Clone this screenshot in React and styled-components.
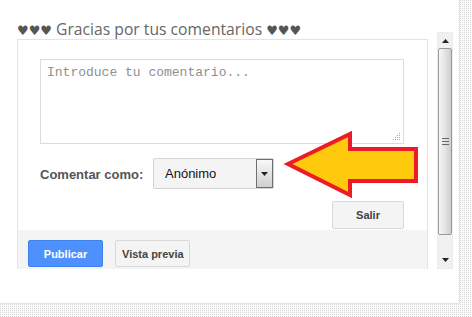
import React from "react";
import styled, { createGlobalStyle } from "styled-components";

const Global = createGlobalStyle`
  html, body { margin: 0; padding: 0; background: #fff; }
  body { font-family: "Liberation Sans", Arial, sans-serif; }
  * { box-sizing: border-box; }
`;

const Page = styled.div`
  position: relative;
  width: 472px;
  height: 317px;
  overflow: hidden;
  background-color: #d6d6d6;
  background-image:
    linear-gradient(90deg, transparent 1px, #fbfbfb 1px),
    linear-gradient(transparent 1px, #fbfbfb 1px);
  background-size: 2px 2px;
`;

const Card = styled.div`
  width: 460px;
  height: 304px;
  background: #fff;
  border-right: 1px solid #e2e2e2;
  border-bottom: 1px solid #e2e2e2;
  padding: 19px 0 0 17px;
`;

const Row = styled.div`
  display: flex;
  align-items: flex-end;
  gap: 9px;
`;

const Column = styled.div`
  width: 411px;
  display: flex;
  flex-direction: column;
`;

const Title = styled.h2`
  margin: 0;
  height: 20px;
  font-family: "Open Sans", "DejaVu Sans", sans-serif;
  font-weight: 400;
  font-size: 15.7px;
  line-height: 20px;
  color: #666;
  white-space: nowrap;
`;

const Hearts = styled.span`
  font-family: "DejaVu Sans", sans-serif;
  font-size: 13px;
  line-height: 1;
  color: #555;
`;

const Frame = styled.div`
  height: 230px;
  border: 1px solid #e4e4e4;
  border-bottom: none;
  display: flex;
  flex-direction: column;
  overflow: hidden;
`;

const Body = styled.div`
  padding: 19px 23px 0 22px;
`;

const AreaWrap = styled.div`
  position: relative;
  width: 100%;
  height: 85px;
`;

const TextArea = styled.textarea`
  display: block;
  width: 100%;
  height: 100%;
  resize: none;
  border: 1px solid #dcdcdc;
  padding: 5px 6px;
  font-family: "Liberation Mono", "Courier New", monospace;
  font-size: 13px;
  line-height: 16px;
  color: #333;
  outline: none;
  &::placeholder { color: #8f8f8f; }
`;

const Grip = styled.svg`
  position: absolute;
  right: 3px;
  bottom: 3px;
`;

const FormRow = styled.div`
  display: flex;
  align-items: center;
  margin-top: 14px;
`;

const Label = styled.label`
  flex: none;
  width: 113px;
  font-weight: 700;
  font-size: 13px;
  color: #555;
  padding-top: 1px;
`;

const Select = styled.div`
  position: relative;
  width: 121px;
  height: 31px;
  border: 1px solid #d4d4d4;
  border-radius: 2px;
  background: #f4f4f4;
  display: flex;
  align-items: center;
  padding-left: 11px;
  font-size: 13px;
  color: #111;
`;

const SelectButton = styled.span`
  position: absolute;
  right: 0;
  top: 0;
  bottom: 0;
  width: 17px;
  border: 1px solid #6f6f6f;
  background: linear-gradient(#f8f8f8, #cfcfcf);
  display: flex;
  align-items: center;
  justify-content: center;
`;

const Actions = styled.div`
  display: flex;
  justify-content: flex-end;
  margin-top: 12px;
  margin-bottom: 1px;
`;

const Button = styled.button`
  height: ${(p) => p.$h || 27}px;
  width: ${(p) => p.$w}px;
  padding: 0 6px;
  border-radius: 2px;
  font-family: "Liberation Sans", Arial, sans-serif;
  font-weight: 700;
  font-size: 11px;
  white-space: nowrap;
  overflow: hidden;
  border: 1px solid ${(p) => (p.$primary ? "#3b82ee" : "#d8d8d8")};
  background: ${(p) => (p.$primary ? "#4d90fe" : "#f4f4f4")};
  color: ${(p) => (p.$primary ? "#fff" : "#444")};
`;

const Footer = styled.div`
  flex: 1;
  background: #f4f4f4;
  display: flex;
  align-items: flex-start;
  gap: 12px;
  padding: 10px 0 0 10px;
`;

const Scrollbar = styled.div`
  width: 16px;
  height: 237px;
  background: #f0f0f0;
  border: 1px solid #ececec;
  display: flex;
  flex-direction: column;
`;

const ScrollBtn = styled.div`
  height: ${(p) => p.$h}px;
  flex: ${(p) => (p.$grow ? 1 : "none")};
  display: flex;
  align-items: ${(p) => (p.$end ? "flex-end" : "center")};
  justify-content: center;
  padding-bottom: ${(p) => (p.$end ? 6 : 0)}px;
`;

const Thumb = styled.div`
  height: 187px;
  border: 1px solid #9a9a9a;
  border-radius: 2px;
  background: linear-gradient(90deg, #f6f6f6 0%, #e6e6e6 45%, #cdcdcd 100%);
  display: flex;
  align-items: center;
  justify-content: center;
`;

const Arrow = styled.svg`
  position: absolute;
  left: 0;
  top: 0;
  pointer-events: none;
`;

const Tri = ({ up }) => (
  <svg width="7" height="4" viewBox="0 0 7 4">
    <path d={up ? "M0 4 L3.5 0 L7 4 Z" : "M0 0 L7 0 L3.5 4 Z"} fill="#222" />
  </svg>
);

export default function App() {
  return (
    <Page>
      <Global />
      <Card>
        <Row>
          <Column>
            <Title>
              <Hearts>♥♥♥</Hearts> Gracias por tus comentarios <Hearts>♥♥♥</Hearts>
            </Title>
            <Frame>
              <Body>
                <AreaWrap>
                  <TextArea placeholder="Introduce tu comentario..." />
                  <Grip width="8" height="8" viewBox="0 0 8 8">
                    <g fill="#aaa">
                      <rect x="6" y="0" width="1" height="1" />
                      <rect x="4" y="2" width="1" height="1" />
                      <rect x="6" y="2" width="1" height="1" />
                      <rect x="2" y="4" width="1" height="1" />
                      <rect x="4" y="4" width="1" height="1" />
                      <rect x="6" y="4" width="1" height="1" />
                      <rect x="0" y="6" width="1" height="1" />
                      <rect x="2" y="6" width="1" height="1" />
                      <rect x="4" y="6" width="1" height="1" />
                      <rect x="6" y="6" width="1" height="1" />
                    </g>
                  </Grip>
                </AreaWrap>
                <FormRow>
                  <Label>Comentar como:</Label>
                  <Select>
                    Anónimo
                    <SelectButton>
                      <Tri />
                    </SelectButton>
                  </Select>
                </FormRow>
                <Actions>
                  <Button $w={72} $h={28}>Salir</Button>
                </Actions>
              </Body>
              <Footer>
                <Button $primary $w={75}>Publicar</Button>
                <Button $w={75}>Vista previa</Button>
              </Footer>
            </Frame>
          </Column>
          <Scrollbar>
            <ScrollBtn $h={15}>
              <Tri up />
            </ScrollBtn>
            <Thumb>
              <svg width="7" height="7" viewBox="0 0 7 7">
                <g fill="#666">
                  <rect x="0" y="0" width="7" height="1" />
                  <rect x="0" y="3" width="7" height="1" />
                  <rect x="0" y="6" width="7" height="1" />
                </g>
              </svg>
            </Thumb>
            <ScrollBtn $grow $end>
              <Tri />
            </ScrollBtn>
          </Scrollbar>
        </Row>
      </Card>
      <Arrow width="472" height="317" viewBox="0 0 472 317">
        <polygon
          points="288,164 350,134 350,149 416,149 416,181 350,181 350,195"
          fill="#ffc90e"
          stroke="#ed1c24"
          strokeWidth="4"
          strokeLinejoin="miter"
        />
      </Arrow>
    </Page>
  );
}
